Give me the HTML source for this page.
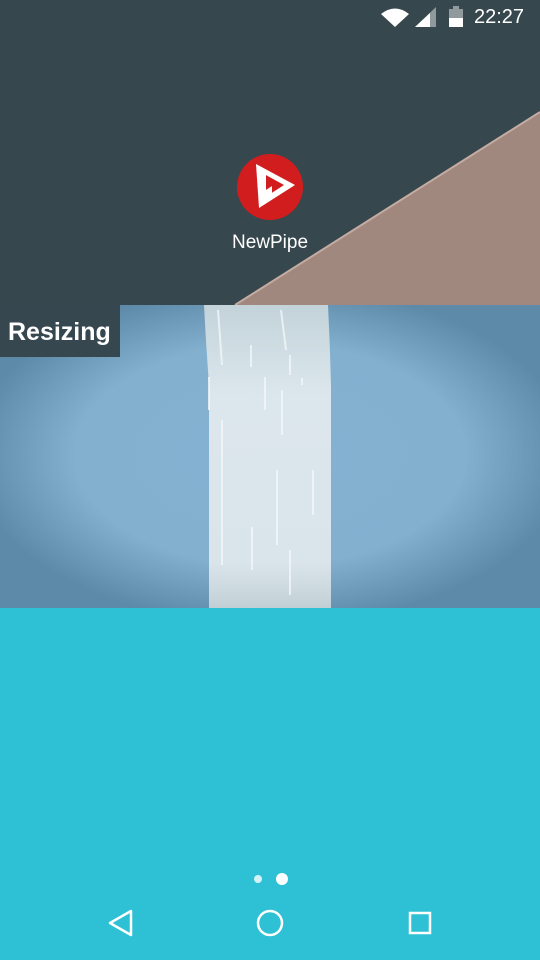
<!DOCTYPE html>
<html><head><meta charset="utf-8"><style>
html,body{margin:0;padding:0}
body{width:540px;height:960px;position:relative;overflow:hidden;background:#2ec0d4;font-family:"Liberation Sans",sans-serif}
.top{position:absolute;left:0;top:0;width:540px;height:305px;background:#36474e}
.img{position:absolute;left:0;top:305px;width:540px;height:303px;background:radial-gradient(ellipse 300px 170px at 270px 150px,#85b2d2 0%,#83b0cf 65%,#5e8aaa 100%)}
.label{position:absolute;left:0;top:305px;width:120px;height:52px;background:#37474f;color:#fff;font-weight:bold;font-size:25px;line-height:54px;padding-left:8px;box-sizing:border-box}
.time{position:absolute;left:474px;top:6px;color:#fff;font-size:20px}
.appname{position:absolute;left:0;width:540px;top:232px;text-align:center;color:#fff;font-size:19px}
</style></head><body>
<div class="top"></div>
<svg style="position:absolute;left:0;top:0" width="540" height="305">
<polygon points="235,305 540,112 540,305" fill="#a1887f"/>
<line x1="235" y1="305" x2="540" y2="112" stroke="#c4aca3" stroke-width="2"/>
<path d="M381,14 Q395,3 409,14 L395,27 Z" fill="#fff"/>
<polygon points="415,27 436,27 436,7" fill="#fff" opacity="0.45"/>
<polygon points="415,27 430,27 430,13" fill="#fff"/>
<rect x="449" y="9" width="14" height="18" fill="#fff" opacity="0.45"/>
<rect x="453" y="6" width="6" height="3" fill="#fff" opacity="0.45"/>
<rect x="449" y="18" width="14" height="9" fill="#fff"/>
<circle cx="270" cy="187" r="33" fill="#d21d1e"/>
<polygon points="256,164 295,185 259,208" fill="#fff"/>
<polygon points="264,174 284,185 267,196" fill="#d21d1e"/>
<polygon points="259,168 266,172 266,199 259,203" fill="#fff"/>
<polygon points="266,190 272,186 272,199 266,200" fill="#fff"/>
</svg>
<div class="time">22:27</div>
<div class="appname">NewPipe</div>
<div class="img"></div>
<svg style="position:absolute;left:0;top:305px" width="540" height="303">
<defs><linearGradient id="w" x1="0" y1="0" x2="0" y2="1"><stop offset="0" stop-color="#c3d3da"/><stop offset="0.3" stop-color="#dce7ed"/><stop offset="0.85" stop-color="#dae5eb"/><stop offset="1" stop-color="#c2d0d6"/></linearGradient></defs>
<path d="M204,0 L328,0 Q330,40 331,80 L331,303 L209,303 L209,80 Q206,40 204,0 Z" fill="url(#w)"/>
<g stroke="#f2f7fa" stroke-width="2" opacity="0.8">
<line x1="218" y1="5" x2="222" y2="60"/><line x1="281" y1="5" x2="286" y2="45"/>
<line x1="251" y1="40" x2="251" y2="62"/><line x1="290" y1="50" x2="290" y2="70"/>
<line x1="209" y1="72" x2="209" y2="105"/><line x1="265" y1="72" x2="265" y2="105"/>
<line x1="302" y1="73" x2="302" y2="80"/><line x1="282" y1="85" x2="282" y2="130"/>
<line x1="222" y1="115" x2="222" y2="260"/><line x1="277" y1="165" x2="277" y2="240"/>
<line x1="313" y1="165" x2="313" y2="210"/><line x1="252" y1="222" x2="252" y2="265"/>
<line x1="290" y1="245" x2="290" y2="290"/>
</g>
</svg>
<div class="label">Resizing</div>
<svg style="position:absolute;left:0;top:860px" width="540" height="100">
<circle cx="258" cy="19" r="4" fill="#fff" opacity="0.8"/>
<circle cx="282" cy="19" r="6" fill="#fff"/>
<polygon points="131,51 110,63 131,75" fill="none" stroke="#fff" stroke-width="2.5" stroke-linejoin="round"/>
<circle cx="270" cy="63" r="12" fill="none" stroke="#fff" stroke-width="2.5"/>
<rect x="410" y="53" width="20" height="20" fill="none" stroke="#fff" stroke-width="2.5"/>
</svg>
</body></html>
